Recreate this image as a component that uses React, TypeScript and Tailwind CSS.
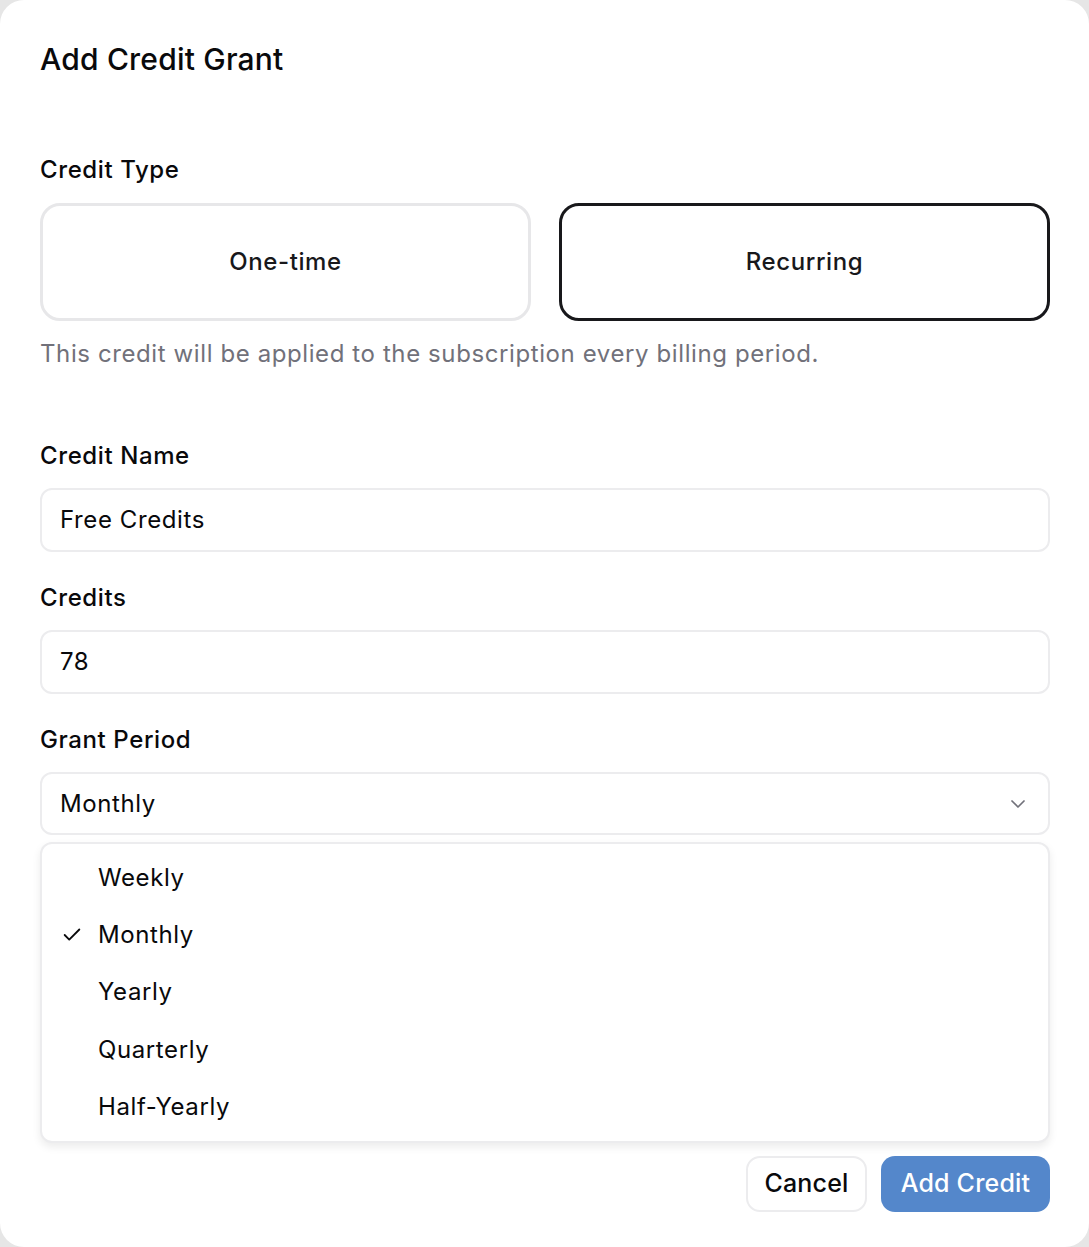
import React from 'react';

const periods = ['Weekly', 'Monthly', 'Yearly', 'Quarterly', 'Half-Yearly'];

const Label: React.FC<{ children: React.ReactNode; className?: string }> = ({ children, className }) => (
    <div className={`text-[24px] leading-[32px] font-medium tracking-[0.6px] text-[#09090b] ${className ?? ''}`}>{children}</div>
);

const TextField: React.FC<{ value: string }> = ({ value }) => (
    <div className="h-[64px] mt-[16px] flex items-center px-[18px] border-2 border-[#ececee] rounded-[12px] text-[24px] tracking-[0.6px] text-[#09090b]">
        {value}
    </div>
);

const App: React.FC = () => {
    const selected = 'Monthly';
    return (
        <div className="min-h-[1247px] bg-[#e6e6e6]" style={{ fontFamily: 'Inter, "Noto Sans", sans-serif' }}>
            <div className="h-[1247px] bg-white rounded-[24px] pl-[40px] pr-[39px] pt-[40px] flex flex-col">
                <h2 className="text-[30px] leading-[38px] font-medium text-[#09090b] tracking-[0.2px]">Add Credit Grant</h2>

                <Label className="mt-[76px]">Credit Type</Label>
                <div className="grid grid-cols-2 gap-[28px] mt-[17px]">
                    <button className="h-[118px] rounded-[20px] border-[3px] border-[#e7e7e9] bg-white text-[24px] font-medium tracking-[0.6px] text-[#18181b]">
                        One-time
                    </button>
                    <button className="h-[118px] rounded-[20px] border-[3px] border-[#18181b] bg-white text-[24px] font-medium tracking-[0.6px] text-[#18181b]">
                        Recurring
                    </button>
                </div>
                <p className="mt-[17px] text-[24px] leading-[32px] tracking-[0.6px] text-[#71717a]">
                    This credit will be applied to the subscription every billing period.
                </p>

                <Label className="mt-[70px]">Credit Name</Label>
                <TextField value="Free Credits" />

                <Label className="mt-[30px]">Credits</Label>
                <TextField value="78" />

                <Label className="mt-[30px]">Grant Period</Label>
                <div className="h-[63px] mt-[16px] flex items-center justify-between pl-[18px] pr-[18px] border-2 border-[#ececee] rounded-[12px] text-[24px] tracking-[0.6px] text-[#09090b]">
                    <span>Monthly</span>
                    <svg className="w-[24px] h-[24px] text-[#71717a]" viewBox="0 0 24 24" fill="none" stroke="currentColor" strokeWidth={1.75} strokeLinecap="round" strokeLinejoin="round">
                        <path d="m6 9 6 6 6-6" />
                    </svg>
                </div>

                <div className="mt-[7px] border-2 border-[#ececee] rounded-[12px] bg-white shadow-[0_4px_8px_rgba(0,0,0,0.08)] py-[5px]">
                    {periods.map(p => (
                        <div key={p} className="h-[57.4px] flex items-center text-[24px] tracking-[0.6px] text-[#09090b]">
                            <span className="w-[56px] flex justify-end pr-[15px]">
                                {p === selected && (
                                    <svg className="w-[22px] h-[22px]" viewBox="0 0 24 24" fill="none" stroke="currentColor" strokeWidth={2} strokeLinecap="round" strokeLinejoin="round">
                                        <path d="M20 6 9 17l-5-5" />
                                    </svg>
                                )}
                            </span>
                            <span>{p}</span>
                        </div>
                    ))}
                </div>

                <div className="mt-[13px] flex justify-end gap-[14px]">
                    <button className="h-[56px] w-[121px] rounded-[14px] border-2 border-[#ececee] bg-white text-[25px] font-medium tracking-[0.2px] text-[#09090b]">
                        Cancel
                    </button>
                    <button className="h-[56px] w-[169px] rounded-[14px] bg-[#5487cb] text-[25px] font-medium tracking-[0.2px] text-white">
                        Add Credit
                    </button>
                </div>
            </div>
        </div>
    );
};

export default App;
